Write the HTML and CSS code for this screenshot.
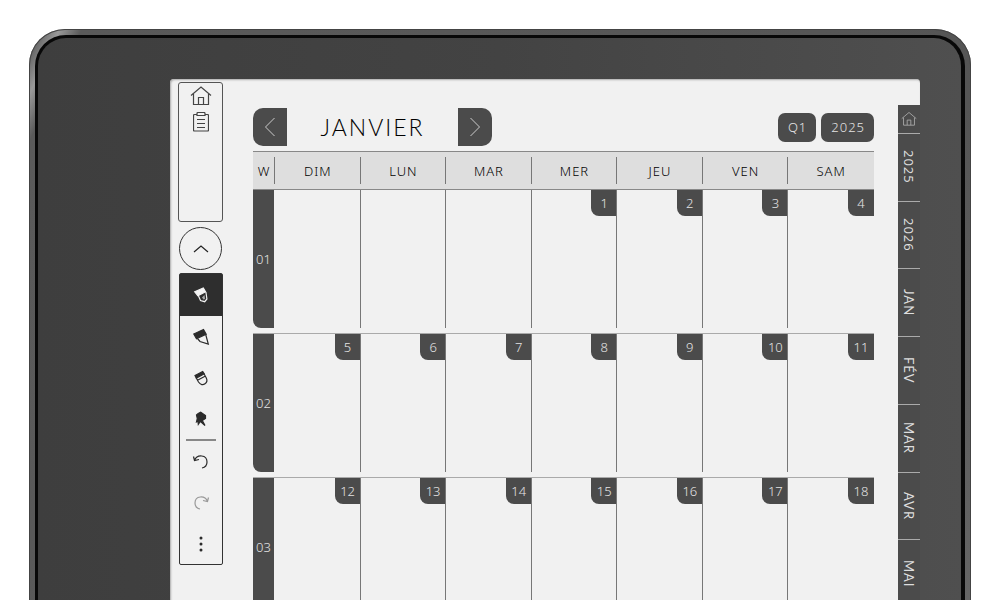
FILE: index.html
```html
<!DOCTYPE html>
<html lang="fr">
<head>
<meta charset="utf-8">
<meta name="viewport" content="width=device-width, initial-scale=1">
<title>Janvier 2025</title>
<link rel="stylesheet" href="styles.css">
</head>
<body>
<div class="device">
<div class="bezel">
<main class="screen">
  <aside class="tools">
    <nav class="shortcuts" aria-label="Raccourcis">
      <button class="shortcut" aria-label="Accueil"><svg width="22" height="20" viewBox="0 0 22 20"><path d="M1 9.500 11 1l10 8.500M3.500 8v10.500h15V8M8.500 18.500v-7h5v7"/></svg></button>
      <button class="shortcut" aria-label="Notes"><svg width="16" height="20" viewBox="0 0 16 20"><path d="M4 2.500H1.500q-1 0-1 1V18q0 1 1 1h13q1 0 1-1V3.500q0-1-1-1H12M4 1.500q0-1 1-1h6q1 0 1 1v2H4zM4 7.500h8M4 11.500h8M4 15.500h8"/></svg></button>
    </nav>
    <button class="collapse" aria-label="Replier"><svg width="16" height="8" viewBox="0 0 16 8"><path d="m1 7 7-6 7 6"/></svg></button>
    <div class="palette" role="toolbar" aria-label="Outils">
      <button class="tool active" aria-label="Stylo"><svg width="18" height="18" viewBox="0 0 18 18"><path class="solid" d="m2.700 5.800 8.600-3.800 2.200 3.800-7.600 4z"/><path d="m6.500 10 2 4.500 4.200 1.200 2.200-2.700-1-7"/><path class="nib" d="m10 11.500 2.500-2.500.5 4-1.500.5z"/></svg></button>
      <button class="tool" aria-label="Surligneur"><svg width="18" height="18" viewBox="0 0 18 18"><path class="solid" d="m1.800 6 9.700-4.500L14.200 6.300l-9.700 4.500z"/><path d="m5.500 10.500 2.500 3 8.300 2.500-2.600-9.500"/></svg></button>
      <button class="tool" aria-label="Gomme"><svg width="18" height="18" viewBox="0 0 18 18"><path class="solid" d="m3 6.500 7.700-4 1.500 2.300-7.900 4.400z"/><path d="m4.300 9 2.200 4c2 3 4.500 3.200 6.500 1.800s2.500-3.300 1.300-5.800L12 4.700M5.500 11.300l8-4.300"/></svg></button>
      <button class="tool" aria-label="Sélection"><svg width="18" height="18" viewBox="0 0 18 18"><path class="solid" d="m4.500 5 1.700-1.500 2.500-1.300 1.500 1L13.500 5.500v3l-3.200 2L13 15.500 8.300 11.300l-2 3-.3-3-1.500.7.800-3.500z"/></svg></button>
      <hr class="rule">
      <button class="tool" aria-label="Annuler"><svg width="18" height="18" viewBox="0 0 18 18"><path d="M2.500 7.500C5 1 15 1.500 15 9q0 5-5 6M1.500 3.500l1 4 4.500-1"/></svg></button>
      <button class="tool faded" aria-label="Rétablir"><svg width="18" height="18" viewBox="0 0 18 18"><path d="M15.500 7.500C13 1 3 1.500 3 9q0 5 5 6M16.500 3.500l-1 4-4.500-1"/></svg></button>
      <button class="tool" aria-label="Plus"><svg width="18" height="18" viewBox="0 0 18 18"><path class="dot" d="M9 3v.01M9 9v.01M9 15v.01"/></svg></button>
    </div>
  </aside>

  <section class="planner">
    <header class="top">
      <button class="arrow prev" aria-label="Mois précédent"><svg width="12" height="20" viewBox="0 0 12 20"><path d="m10.500 1-9 9 9 9"/></svg></button>
      <h1 class="month">JANVIER</h1>
      <button class="arrow next" aria-label="Mois suivant"><svg width="12" height="20" viewBox="0 0 12 20"><path d="m1.500 1 9 9-9 9"/></svg></button>
      <div class="jump"><a class="pill" href="#q1">Q1</a><a class="pill" href="#2025">2025</a></div>
    </header>
    <table class="calendar">
      <colgroup><col class="weekcol"><col span="7"></colgroup>
      <thead><tr><th scope="col">W</th><th scope="col">DIM</th><th scope="col">LUN</th><th scope="col">MAR</th><th scope="col">MER</th><th scope="col">JEU</th><th scope="col">VEN</th><th scope="col">SAM</th></tr></thead>
      <tbody>
        <tr><th scope="row"><span class="week">01</span></th><td></td><td></td><td></td><td><a class="day" href="#d1">1</a></td><td><a class="day" href="#d2">2</a></td><td><a class="day" href="#d3">3</a></td><td><a class="day" href="#d4">4</a></td></tr>
        <tr><th scope="row"><span class="week">02</span></th><td><a class="day" href="#d5">5</a></td><td><a class="day" href="#d6">6</a></td><td><a class="day" href="#d7">7</a></td><td><a class="day" href="#d8">8</a></td><td><a class="day" href="#d9">9</a></td><td><a class="day" href="#d10">10</a></td><td><a class="day" href="#d11">11</a></td></tr>
        <tr><th scope="row"><span class="week">03</span></th><td><a class="day" href="#d12">12</a></td><td><a class="day" href="#d13">13</a></td><td><a class="day" href="#d14">14</a></td><td><a class="day" href="#d15">15</a></td><td><a class="day" href="#d16">16</a></td><td><a class="day" href="#d17">17</a></td><td><a class="day" href="#d18">18</a></td></tr>
      </tbody>
    </table>
  </section>

  <nav class="tabs" aria-label="Sections">
    <a class="hometab" href="#home" aria-label="Accueil"><svg width="16" height="16" viewBox="0 0 22 20"><path d="M1 9.500 11 1l10 8.500M3.500 8v10.500h15V8M8.500 18.500v-7h5v7"/></svg></a>
    <div class="tablist"><a class="tab" href="#y2025">2025</a><a class="tab" href="#y2026">2026</a><a class="tab name" href="#jan">JAN</a><a class="tab name" href="#fev">FÉV</a><a class="tab name" href="#mar">MAR</a><a class="tab name" href="#avr">AVR</a><a class="tab name" href="#mai">MAI</a></div>
  </nav>
</main>
</div>
</div>
</body>
</html>
```

FILE: styles.css
```css
* { box-sizing: border-box; }
body {
  margin: 0;
  height: 100vh;
  overflow: hidden;
  background: #fff;
  color: #222;
  font: 300 13px/18px "Noto Sans", "Open Sans", sans-serif;
}
button { margin: 0; padding: 0; border: 0; background: none; color: inherit; font: inherit; }
a { color: inherit; text-decoration: none; }
svg { display: block; fill: none; stroke: currentColor; stroke-width: 1.2; }
.solid { fill: currentColor; }
.nib { fill: #aaa; stroke: none; }

.device {
  margin: 29px 29px 0 29px;
  padding: 6px 6px 0 6px;
  border-radius: 36px 36px 0 0;
  background: linear-gradient(115deg, #555 0, #666 12px, #999 28px, #5a5a5a 48px, #555 80%, #666 100%);
  box-shadow: inset 0 0 0 1px #444;
}
.bezel {
  padding: 41px 41px 0 132px;
  border: solid #080808;
  border-width: 3px 4px 0 3px;
  border-radius: 31px 31px 0 0;
  background: linear-gradient(90deg, #3e3e3e, #434343 50%, #4f4f4f);
}
.screen {
  display: flex;
  align-items: flex-start;
  min-height: 521px;
  padding-left: 8px;
  border-radius: 4px 4px 0 0;
  background: #f1f1f1;
  box-shadow: inset 1px 1px 2px #aaa;
}

.tools { display: flex; flex-direction: column; align-items: center; width: 45px; padding-top: 3px; }
.shortcuts {
  display: flex;
  flex-direction: column;
  align-items: center;
  gap: 6px;
  width: 100%;
  height: 140px;
  padding-top: 3px;
  border: 1px solid #555;
  border-radius: 3px;
}
.shortcut { color: #444; }
.collapse {
  display: grid;
  place-items: center;
  width: 43px;
  height: 43px;
  margin: 5px 0 3px;
  border: 1px solid #333;
  border-radius: 50%;
}
.palette {
  display: flex;
  flex-direction: column;
  width: 44px;
  border: 1px solid #333;
  border-radius: 2px;
}
.tool { display: grid; place-items: center; height: 41px; color: #2b2b2b; }
.active { height: 42px; background: #2e2e2e; color: #f4f4f4; }
.faded { color: #999; }
.dot { stroke-width: 3; stroke-linecap: round; }
.rule { width: 30px; height: 2px; margin: 0 auto; border: 0; background: #888; }

.planner { flex: 1; min-width: 0; padding: 29px 24px 0 30px; }
.top { display: flex; align-items: center; height: 38px; margin-bottom: 5px; }
.arrow { display: grid; place-items: center; width: 34px; height: 38px; background: #4b4b4b; color: #ccc; }
.arrow svg { stroke-width: 1; }
.prev { border-radius: 10px 0 0 10px; }
.next { border-radius: 0 10px 10px 0; }
.month {
  width: 171px;
  margin: 0;
  color: #000;
  font-family: Lato, "Noto Sans", sans-serif;
  font-size: 23px;
  font-weight: 300;
  line-height: 30px;
  letter-spacing: 2px;
  text-align: center;
}
.jump { display: flex; gap: 5px; margin-left: auto; }
.pill {
  padding: 5px 9px 6px 10px;
  border-radius: 7px;
  background: #4b4b4b;
  color: #e4e4e4;
  letter-spacing: 1px;
}

.calendar { width: 100%; table-layout: fixed; border-collapse: separate; border-spacing: 0; }
.weekcol { width: 22px; }
.calendar th { padding: 0; font-weight: 300; }
.calendar thead th {
  position: relative;
  height: 39px;
  border: solid #888;
  border-width: 1px 0;
  background: #dedede;
  color: #000;
  letter-spacing: 1px;
}
.calendar tbody th, .calendar td {
  position: relative;
  height: 144px;
  padding: 0;
  border-bottom: 1px solid #aaa;
  vertical-align: top;
}
.calendar thead th::after, .calendar td::after {
  content: "";
  position: absolute;
  top: 5px;
  right: 0;
  bottom: 5px;
  width: 1px;
  background: #777;
}
.calendar td::after { top: 0; }
.calendar tr > :last-child::after { display: none; }
.week {
  display: grid;
  place-items: center;
  height: 138px;
  margin-right: 1px;
  border-radius: 0 0 0 8px;
  background: #4b4b4b;
  color: #e4e4e4;
}
.day {
  display: block;
  width: 26px;
  height: 26px;
  margin-left: auto;
  border-radius: 0 0 0 8px;
  background: #4b4b4b;
  color: #e4e4e4;
  line-height: 26px;
  text-align: center;
}

.tabs { width: 22px; padding-top: 26px; color: #ddd; }
.hometab { display: grid; place-items: center; height: 28px; background: #4b4b4b; color: #aaa; }
.tablist { display: flex; flex-direction: column; height: 474px; }
.tab {
  display: flex;
  flex: 1;
  align-items: center;
  justify-content: center;
  border-top: 1px solid #aaa;
  background: #4b4b4b;
  font-weight: 400;
  letter-spacing: 1px;
  line-height: 22px;
  writing-mode: vertical-rl;
}
.name { font-family: Lato, "Noto Sans", sans-serif; }
```
